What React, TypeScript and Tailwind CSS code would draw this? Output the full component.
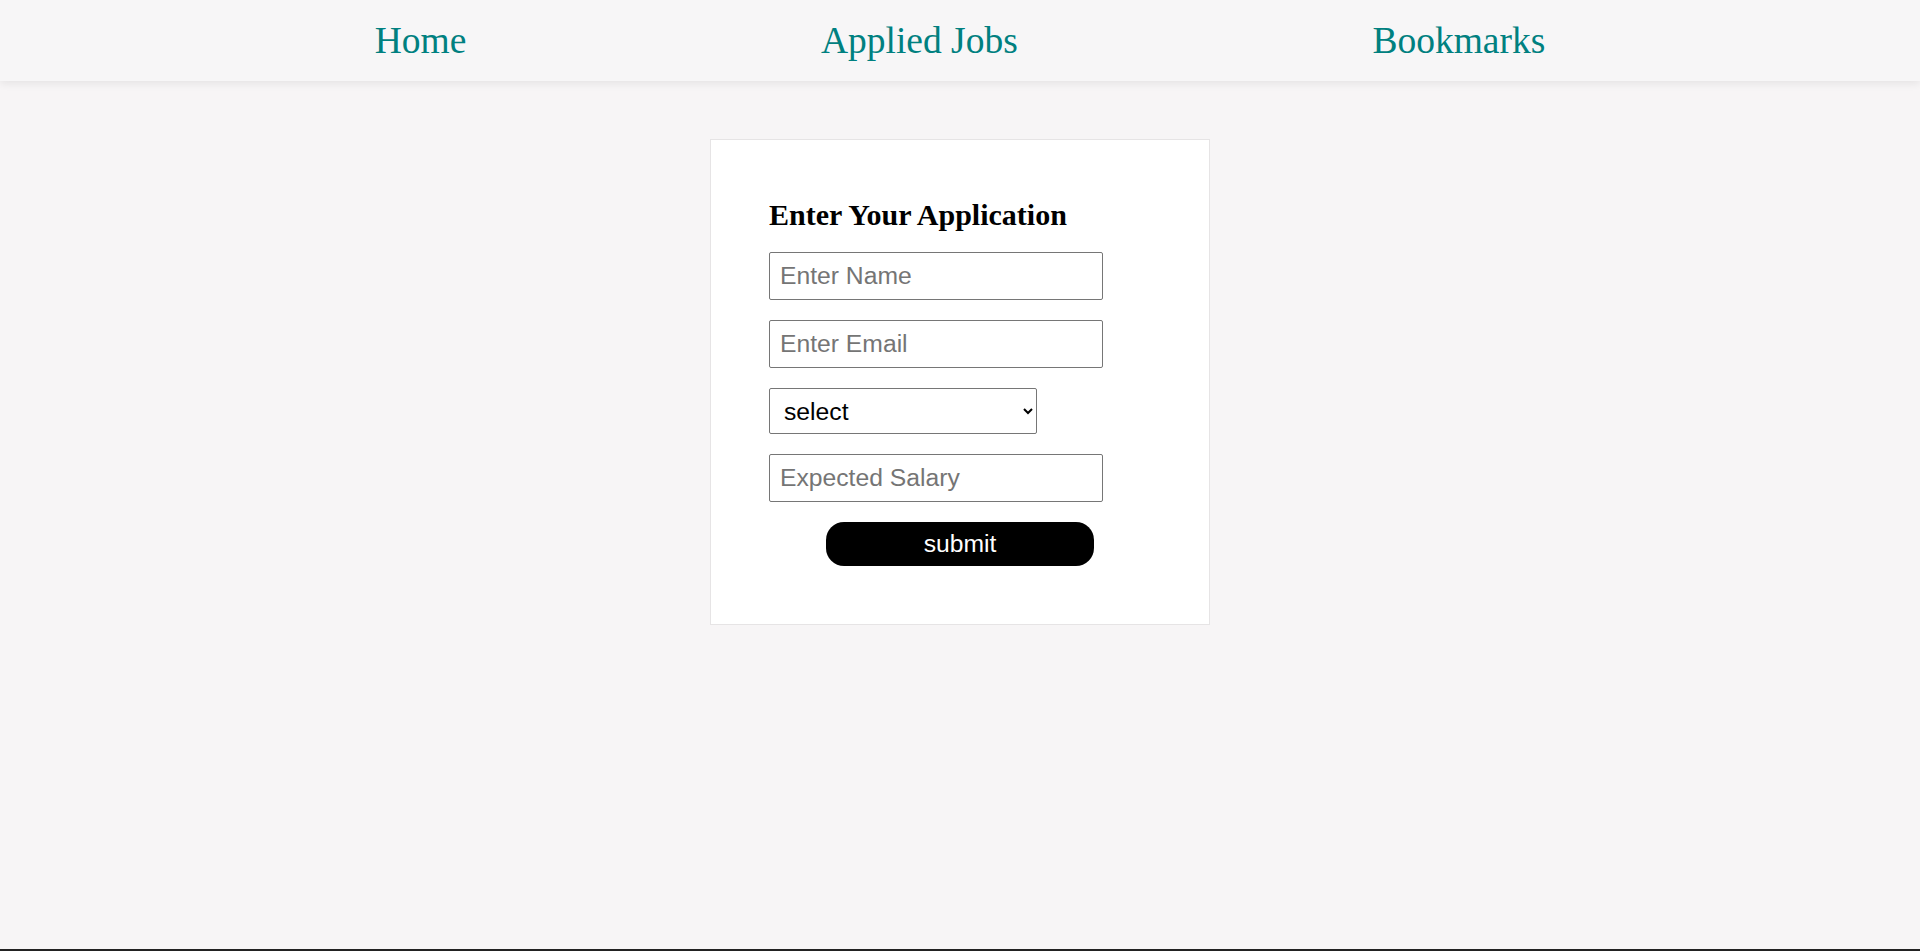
import { useState } from 'react';

const NAV_LINKS = ['Home', 'Applied Jobs', 'Bookmarks'];

export default function App() {
  const [name, setName] = useState('');
  const [email, setEmail] = useState('');
  const [role, setRole] = useState('');
  const [salary, setSalary] = useState('');

  return (
    <div className="min-h-[951px] flex flex-col bg-[#f7f5f6]">
      <nav className="h-[81px] px-[20px] pt-[2px] flex items-center justify-evenly bg-[#f7f6f7] shadow-[0_3px_8px_rgba(0,0,0,0.07)]">
        {NAV_LINKS.map((link) => (
          <a
            key={link}
            href="#"
            className="text-[37.5px] text-[#008080] font-['Liberation_Serif',serif]"
          >
            {link}
          </a>
        ))}
      </nav>

      <main className="flex-1 flex justify-center pt-[58px]">
        <form
          className="w-[500px] h-fit bg-white border border-[#e6e4e5] p-[58px] flex flex-col gap-[20px] font-['Liberation_Sans',Arial,sans-serif]"
          onSubmit={(e) => e.preventDefault()}
        >
          <h2 className="text-[30px] font-bold leading-[34px] text-black font-['Liberation_Serif',serif]">
            Enter Your Application
          </h2>
          <input
            type="text"
            placeholder="Enter Name"
            value={name}
            onChange={(e) => setName(e.target.value)}
            className="w-[334px] h-[48px] px-[10px] border border-[#767676] rounded-[2px] text-[24.7px] placeholder:text-[#757575]"
          />
          <input
            type="email"
            placeholder="Enter Email"
            value={email}
            onChange={(e) => setEmail(e.target.value)}
            className="w-[334px] h-[48px] px-[10px] border border-[#767676] rounded-[2px] text-[24.7px] placeholder:text-[#757575]"
          />
          <select
            value={role}
            onChange={(e) => setRole(e.target.value)}
            className="w-[268px] h-[46px] pl-[10px] pr-[4px] border border-[#767676] rounded-[2px] text-[24.7px] text-black bg-white"
          >
            <option value="">select</option>
            <option value="frontend">Frontend Developer</option>
            <option value="backend">Backend Developer</option>
          </select>
          <input
            type="number"
            placeholder="Expected Salary"
            value={salary}
            onChange={(e) => setSalary(e.target.value)}
            className="w-[334px] h-[48px] px-[10px] border border-[#767676] rounded-[2px] text-[24.7px] placeholder:text-[#757575]"
          />
          <button
            type="submit"
            className="mx-auto w-[268px] h-[44px] rounded-[18px] bg-black text-white text-[24.7px]"
          >
            submit
          </button>
        </form>
      </main>

      <div className="h-[2px] bg-[#222222]" />
    </div>
  );
}
